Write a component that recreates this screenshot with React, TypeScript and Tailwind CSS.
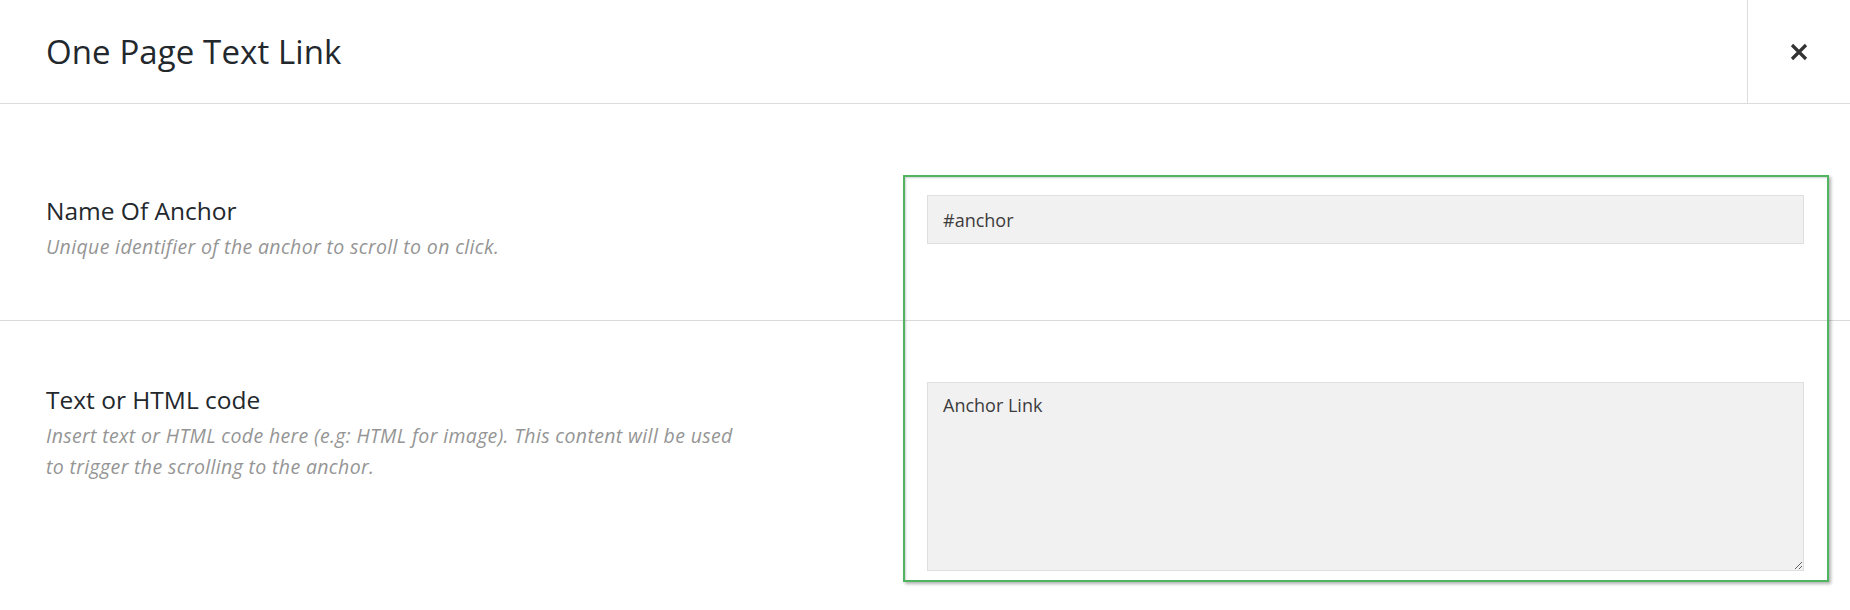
const App = () => {
  return (
    <div className="relative w-[1850px] h-[610px] overflow-hidden bg-white text-[#23282d] font-['Open_Sans','Noto_Sans',sans-serif]">
      {/* Header */}
      <header className="flex h-[104px] border-b border-[#dcdcdc]">
        <h1 className="flex-1 flex items-center pl-[46px] text-[33px] font-normal leading-none tracking-[0.1px] text-[#23282d]">
          One Page Text Link
        </h1>
        <button className="w-[103px] flex items-center justify-center border-l border-[#dcdcdc] text-[#333]">
          <svg width="18" height="18" viewBox="0 0 18 18" fill="none">
            <path d="M2 2L16 16M16 2L2 16" stroke="#333" strokeWidth="3.2" strokeLinecap="butt" />
          </svg>
        </button>
      </header>

      {/* Row: anchor name */}
      <section className="grid grid-cols-[1fr_877px] h-[217px] border-b border-[#d9d9d9] pl-[46px] pr-[46px] pt-[91px]">
        <div>
          <h2 className="mt-[1px] text-[24.5px] leading-[30px] font-medium text-[#23282d]">Name Of Anchor</h2>
          <p className="mt-[6px] text-[19.5px] leading-[30px] tracking-[0.35px] italic text-[#959595]">
            Unique identifier of the anchor to scroll to on click.
          </p>
        </div>
        <input
          defaultValue="#anchor"
          className="h-[49px] w-full bg-[#f2f1f2] border border-[#dfdfdf] px-[15px] text-[18px] text-[#3c3c3c] outline-none"
        />
      </section>

      {/* Row: text or html */}
      <section className="grid grid-cols-[1fr_877px] pl-[46px] pr-[46px] pt-[61px]">
        <div>
          <h2 className="mt-[3px] text-[24.5px] leading-[30px] font-medium text-[#23282d]">Text or HTML code</h2>
          <p className="mt-[5px] max-w-[700px] text-[19.5px] leading-[31px] tracking-[0.35px] italic text-[#959595]">
            Insert text or HTML code here (e.g: HTML for image). This content will be used to trigger the scrolling to the anchor.
          </p>
        </div>
        <textarea
          defaultValue="Anchor Link"
          className="h-[189px] w-full bg-[#f2f1f2] border border-[#dfdfdf] px-[15px] pt-[7px] text-[18px] leading-[30px] text-[#3c3c3c] outline-none resize-y"
        />
      </section>

      {/* Highlight overlay */}
      <div className="pointer-events-none absolute left-[903px] top-[175px] w-[926px] h-[407px] border-2 border-[#4fb560] shadow-[2px_2px_3px_rgba(0,0,0,0.3),inset_1px_1px_2px_rgba(0,0,0,0.18)]" />
    </div>
  );
};

export default App;
